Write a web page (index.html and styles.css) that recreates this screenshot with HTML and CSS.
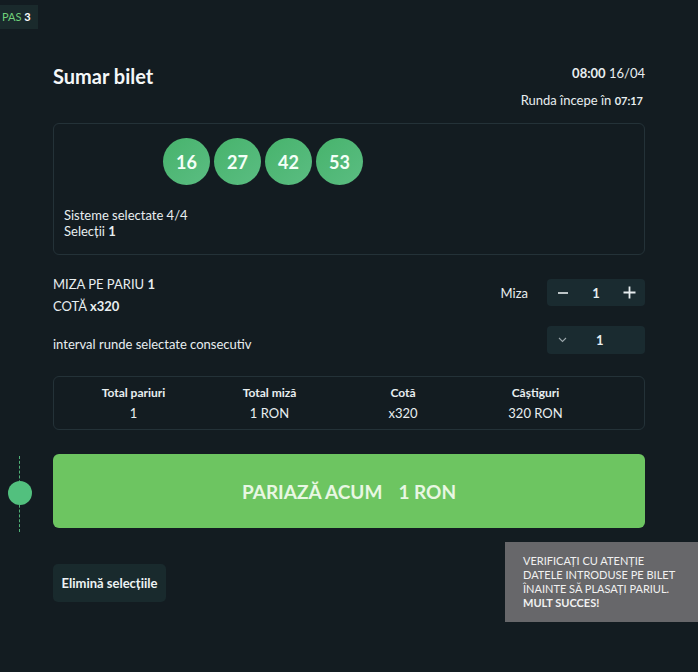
FILE: index.html
```html
<!DOCTYPE html>
<html lang="ro">
<head>
<meta charset="utf-8">
<title>Sumar bilet</title>
<link rel="stylesheet" href="styles.css">
</head>
<body>
<div class="step-badge"><span class="step-label">PAS</span> <b>3</b></div>

<div class="timeline">
  <span class="timeline-line"></span>
  <span class="timeline-dot"></span>
</div>

<main class="ticket">
  <header class="ticket-head">
    <h1 class="title">Sumar bilet</h1>
    <div class="round-info">
      <div class="round-time"><b>08:00</b> 16/04</div>
      <div class="round-start">Runda începe în <b>07:17</b></div>
    </div>
  </header>

  <section class="selection-card">
    <div class="balls">
      <span class="ball">16</span>
      <span class="ball">27</span>
      <span class="ball">42</span>
      <span class="ball">53</span>
    </div>
    <div class="selection-meta">
      <div>Sisteme selectate 4/4</div>
      <div>Selecții <b>1</b></div>
    </div>
  </section>

  <section class="stake-row">
    <div class="stake-info">
      <div>MIZA PE PARIU <b>1</b></div>
      <div>COTĂ <b>x320</b></div>
    </div>
    <div class="stake-control">
      <span class="stake-label">Miza</span>
      <div class="stepper">
        <span class="stepper-btn">
          <svg width="12" height="12" viewBox="0 0 12 12"><path d="M1 6h10" stroke="#e6ecee" stroke-width="1.6"/></svg>
        </span>
        <span class="stepper-value">1</span>
        <span class="stepper-btn">
          <svg width="13" height="13" viewBox="0 0 13 13"><path d="M0.5 6.5h12M6.5 0.5v12" stroke="#e6ecee" stroke-width="1.8"/></svg>
        </span>
      </div>
    </div>
  </section>

  <section class="interval-row">
    <span class="interval-label">interval runde selectate consecutiv</span>
    <div class="dropdown">
      <svg class="chev" width="9" height="6" viewBox="0 0 9 6"><path d="M1 1l3.5 3.5L8 1" fill="none" stroke="#9aa6aa" stroke-width="1.1"/></svg>
      <span class="dropdown-value">1</span>
    </div>
  </section>

  <section class="summary">
    <div class="summary-col"><div class="summary-label">Total pariuri</div><div class="summary-value">1</div></div>
    <div class="summary-col"><div class="summary-label">Total miză</div><div class="summary-value">1 RON</div></div>
    <div class="summary-col"><div class="summary-label">Cotă</div><div class="summary-value">x320</div></div>
    <div class="summary-col"><div class="summary-label">Câștiguri</div><div class="summary-value">320 RON</div></div>
  </section>

  <button class="bet-btn"><span>PARIAZĂ ACUM</span><span>1 RON</span></button>

  <button class="clear-btn">Elimină selecțiile</button>
</main>

<div class="notice">
  VERIFICAȚI CU ATENȚIE<br>
  DATELE INTRODUSE PE BILET<br>
  ÎNAINTE SĂ PLASAȚI PARIUL.<br>
  <b>MULT SUCCES!</b>
</div>
</body>
</html>
```

FILE: styles.css
```css
* { box-sizing: border-box; }

html, body {
  margin: 0;
  padding: 0;
}

body {
  background: #131c21;
  color: #e8eef0;
  font-family: Lato, "Open Sans", "DejaVu Sans", sans-serif;
  font-size: 13px;
  width: 698px;
  height: 672px;
  position: relative;
  overflow: hidden;
}

b { font-weight: 700; }

.step-badge {
  position: absolute;
  left: 0;
  top: 5px;
  width: 38px;
  height: 24px;
  background: #1a2a2c;
  font-size: 11px;
  line-height: 24px;
  padding-left: 2px;
  color: #fff;
}
.step-label { color: #6fd07a; }

.timeline {
  position: absolute;
  left: 8px;
  top: 456px;
  width: 24px;
  height: 76px;
}
.timeline-line {
  position: absolute;
  left: 11px;
  top: 0;
  height: 76px;
  border-left: 1px dashed #4fb077;
}
.timeline-dot {
  position: absolute;
  left: 0;
  top: 25px;
  width: 24px;
  height: 24px;
  border-radius: 50%;
  background: #52c07e;
}

.ticket {
  width: 645px;
  padding: 63px 0 0 53px;
}

.ticket-head {
  display: flex;
  justify-content: space-between;
  align-items: flex-start;
}
.title {
  margin: 0;
  font-size: 20px;
  line-height: 26px;
  font-weight: 700;
  color: #f4f7f8;
}
.round-info {
  text-align: right;
  font-size: 13px;
}
.round-time { line-height: 20px; }
.round-start {
  line-height: 20px;
  margin-top: 7px;
  padding-right: 2px;
}
.round-start b { font-size: 11px; }

.selection-card {
  margin-top: 12px;
  border: 1px solid #243238;
  border-radius: 6px;
  padding: 14px 10px 15px;
}
.balls {
  display: flex;
  gap: 4px;
  margin-left: 99px;
}
.ball {
  width: 47px;
  height: 47px;
  border-radius: 50%;
  background: linear-gradient(135deg, #47b36c, #5bbd82);
  color: #f4fff7;
  font-weight: 700;
  font-size: 18px;
  display: flex;
  align-items: center;
  justify-content: center;
}
.selection-meta {
  margin-top: 22px;
  line-height: 16px;
}

.stake-row {
  margin-top: 18px;
  display: flex;
  justify-content: space-between;
  align-items: flex-start;
}
.stake-info { line-height: 22px; }
.stake-control {
  display: flex;
  align-items: center;
  gap: 19px;
  margin-top: 6px;
}
.stake-label { font-size: 13px; }
.stepper {
  width: 98px;
  height: 27px;
  border-radius: 4px;
  background: #1a2b30;
  display: flex;
  align-items: center;
  justify-content: space-between;
  padding: 0 9px;
}
.stepper-btn {
  display: flex;
  width: 13px;
  justify-content: center;
}
.stepper-value { font-weight: 700; }

.interval-row {
  margin-top: 9px;
  display: flex;
  justify-content: space-between;
  align-items: center;
}
.interval-label { padding-top: 8px; }
.dropdown {
  width: 98px;
  height: 28px;
  border-radius: 4px;
  background: #1a2b30;
  display: flex;
  align-items: center;
  padding-left: 11px;
  gap: 29px;
}
.dropdown-value { font-weight: 700; }

.summary {
  margin-top: 22px;
  border: 1px solid #243238;
  border-radius: 6px;
  height: 54px;
  padding: 8px 0 0 12px;
  display: grid;
  grid-template-columns: 135px 137px 130px 135px;
  text-align: center;
}
.summary-label {
  font-size: 12px;
  font-weight: 700;
  line-height: 16px;
}
.summary-value {
  margin-top: 3px;
  line-height: 18px;
}

.bet-btn {
  display: flex;
  justify-content: center;
  gap: 16px;
  margin-top: 24px;
  width: 592px;
  height: 74px;
  border: 0;
  border-radius: 6px;
  background: #6dc561;
  color: #e8f7e3;
  font-family: inherit;
  font-size: 19px;
  font-weight: 700;
  align-items: center;
  padding: 0;
}

.clear-btn {
  display: block;
  margin-top: 36px;
  width: 113px;
  height: 38px;
  border: 0;
  border-radius: 5px;
  background: #192a2d;
  color: #eef3f4;
  font-family: inherit;
  font-size: 13px;
  font-weight: 700;
  padding: 0;
}

.notice {
  position: absolute;
  left: 505px;
  top: 542px;
  width: 193px;
  height: 80px;
  background: #67676a;
  color: #f1f1f1;
  font-size: 11px;
  line-height: 14px;
  padding: 12px 6px 0 18px;
  white-space: nowrap;
}
```
